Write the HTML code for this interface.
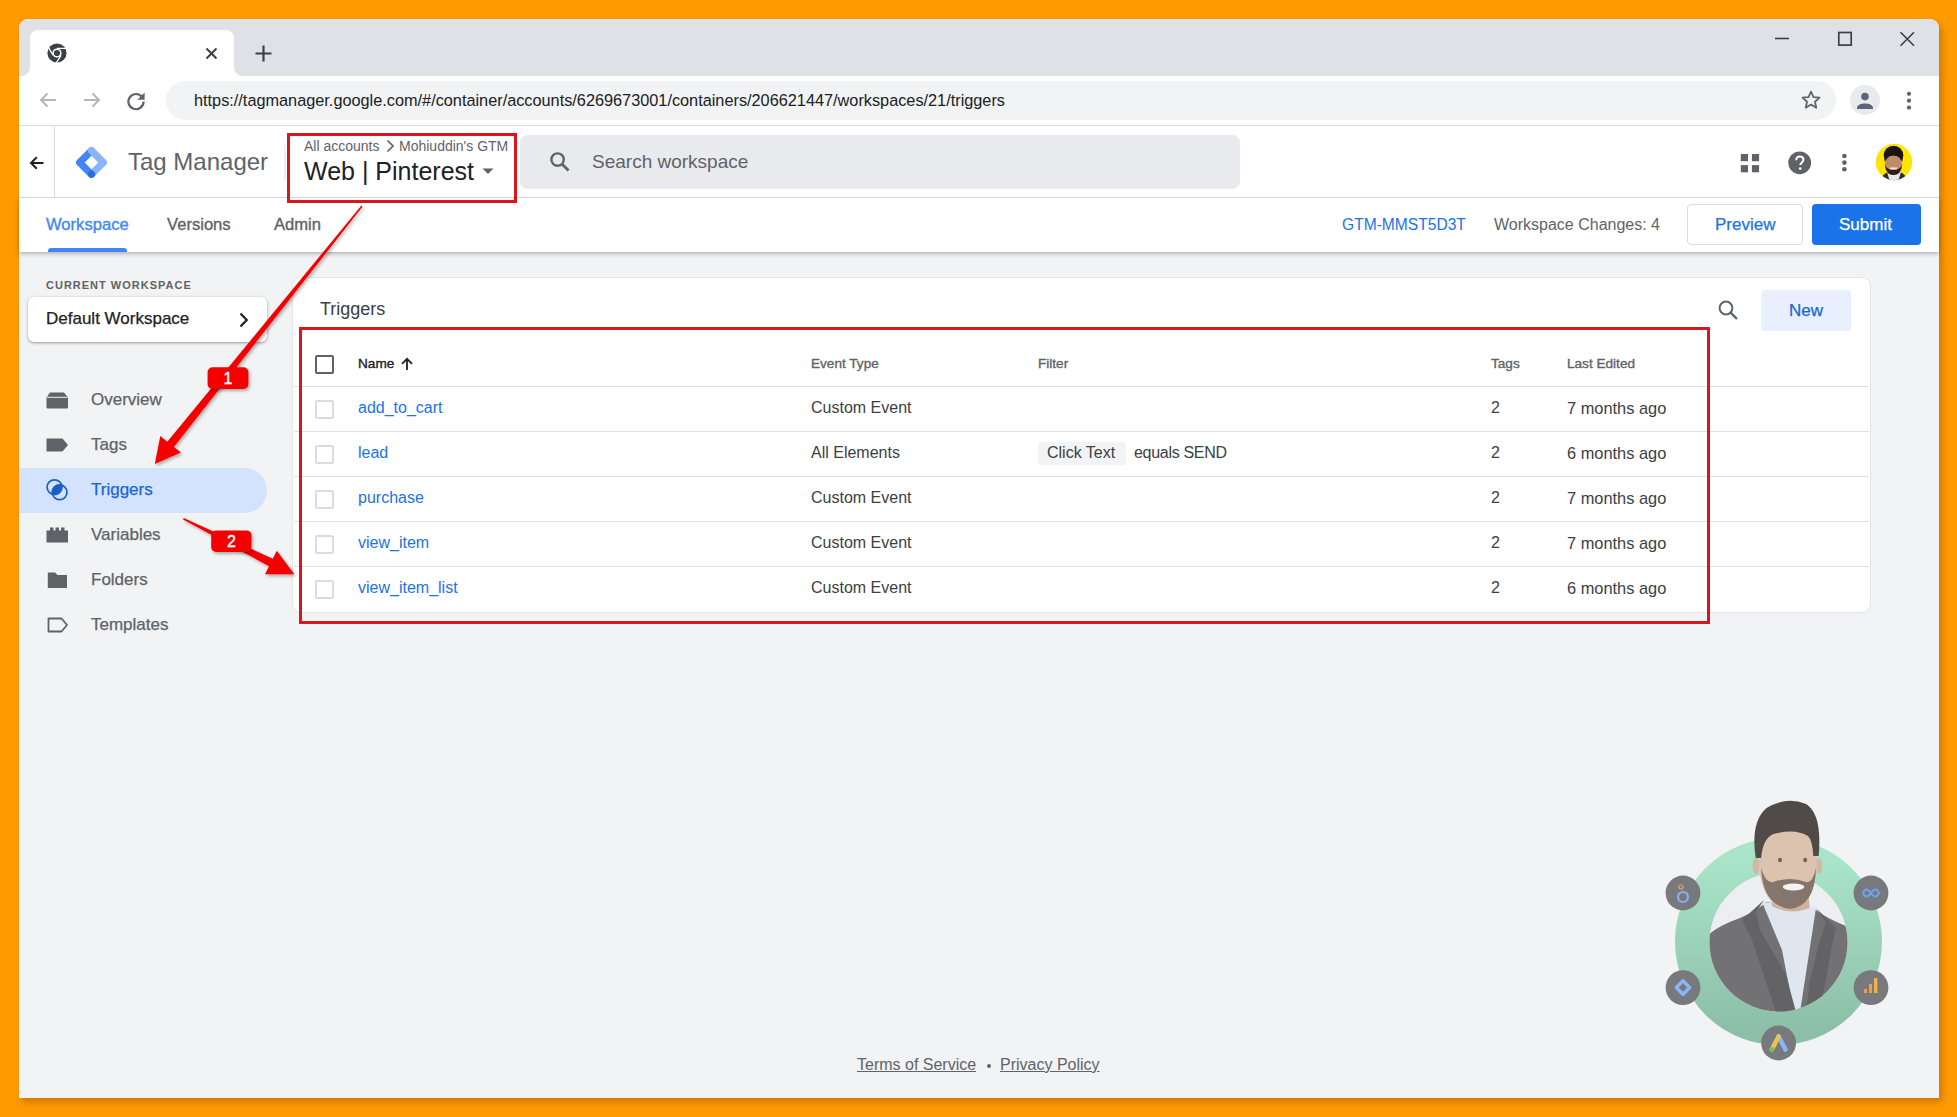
<!DOCTYPE html>
<html><head><meta charset="utf-8">
<style>
*{box-sizing:border-box;margin:0;padding:0}
html,body{width:1957px;height:1117px;overflow:hidden}
body{background:#ff9b00;font-family:"Liberation Sans",sans-serif;position:relative}
.a{position:absolute}
.t{position:absolute;white-space:nowrap;line-height:1}
.m{-webkit-text-stroke-width:0.25px}
#win{left:19px;top:19px;width:1920px;height:1079px;background:#f1f3f4;border-radius:9px 9px 0 0;overflow:hidden;box-shadow:3px 4px 7px rgba(120,60,0,.38)}
</style></head>
<body>
<div id="win" class="a"></div>

<!-- tab strip -->
<div class="a" style="left:19px;top:19px;width:1920px;height:57px;background:#dee1e6;border-radius:9px 9px 0 0"></div>
<!-- active tab -->
<div class="a" style="left:30px;top:30px;width:204px;height:46px;background:#fff;border-radius:8px 8px 0 0"></div>
<div class="a" style="left:22px;top:68px;width:8px;height:8px;background:radial-gradient(circle at 0 0,#dee1e6 7.5px,#fff 8px)"></div>
<div class="a" style="left:234px;top:68px;width:8px;height:8px;background:radial-gradient(circle at 100% 0,#dee1e6 7.5px,#fff 8px)"></div>

<!-- toolbar -->
<div class="a" style="left:19px;top:76px;width:1920px;height:50px;background:#fff;border-bottom:1px solid #dadce0"></div>
<div class="a" style="left:166px;top:81px;width:1670px;height:39px;background:#f1f3f4;border-radius:20px"></div>
<div class="t" style="left:194px;top:92px;font-size:16.3px;color:#202124">https://tagmanager.google.com/#/container/accounts/6269673001/containers/206621447/workspaces/21/triggers</div>


<!-- browser icons -->
<svg class="a" style="left:46px;top:42px" width="22" height="22" viewBox="0 0 22 22">
  <circle cx="11" cy="11" r="9.6" fill="#3c4043"/>
  <circle cx="11" cy="11" r="4.6" fill="#fff"/>
  <circle cx="11" cy="11" r="3.1" fill="#3c4043"/>
  <path d="M11 6.4 L20 6.4 M7 13.3 L2.6 5.6 M15 13.3 L10.2 21" stroke="#fff" stroke-width="1.3" fill="none"/>
</svg>
<svg class="a" style="left:205px;top:47px" width="13" height="13" viewBox="0 0 13 13"><path d="M1.5 1.5L11.5 11.5M11.5 1.5L1.5 11.5" stroke="#3c4043" stroke-width="2"/></svg>
<svg class="a" style="left:255px;top:45px" width="17" height="17" viewBox="0 0 17 17"><path d="M8.5 0.5V16.5M0.5 8.5H16.5" stroke="#3c4043" stroke-width="2.2"/></svg>
<!-- window controls -->
<svg class="a" style="left:1773px;top:30px" width="18" height="18" viewBox="0 0 18 18"><path d="M2 8.5H16" stroke="#3c4043" stroke-width="1.6"/></svg>
<svg class="a" style="left:1836px;top:30px" width="18" height="18" viewBox="0 0 18 18"><rect x="2.8" y="2.5" width="12.4" height="12.6" fill="none" stroke="#3c4043" stroke-width="1.7"/></svg>
<svg class="a" style="left:1898px;top:30px" width="18" height="18" viewBox="0 0 18 18"><path d="M2.5 2.2L16 15.8M16 2.2L2.5 15.8" stroke="#3c4043" stroke-width="1.6"/></svg>
<!-- nav arrows -->
<svg class="a" style="left:38px;top:90px" width="20" height="20" viewBox="0 0 20 20"><path d="M18 10H3M9.5 3.5L3 10L9.5 16.5" stroke="#b4b7bb" stroke-width="2" fill="none"/></svg>
<svg class="a" style="left:82px;top:90px" width="20" height="20" viewBox="0 0 20 20"><path d="M2 10H17M10.5 3.5L17 10L10.5 16.5" stroke="#b4b7bb" stroke-width="2" fill="none"/></svg>
<svg class="a" style="left:125px;top:90px" width="22" height="22" viewBox="0 0 22 22"><path d="M17.2 7.2A7.6 7.6 0 1 0 18.6 11.6" stroke="#5f6368" stroke-width="2.2" fill="none"/><path d="M19.6 2.6V9.8H12.4Z" fill="#5f6368"/></svg>
<svg class="a" style="left:1800px;top:89px" width="22" height="22" viewBox="0 0 24 24"><path d="M12 2.8l2.7 6.1 6.6.6-5 4.4 1.5 6.5L12 17l-5.8 3.4 1.5-6.5-5-4.4 6.6-.6z" fill="none" stroke="#5f6368" stroke-width="1.9" stroke-linejoin="round"/></svg>
<div class="a" style="left:1850px;top:85px;width:30px;height:30px;border-radius:50%;background:#e8eaed"></div>
<svg class="a" style="left:1853px;top:89px" width="24" height="24" viewBox="0 0 24 24"><circle cx="12" cy="7.6" r="3.8" fill="#5b6577"/><path d="M4 19.2c0-3.4 4.4-4.8 8-4.8s8 1.4 8 4.8V20H4z" fill="#5b6577"/></svg>
<svg class="a" style="left:1904px;top:90px" width="10" height="22" viewBox="0 0 10 22"><circle cx="5" cy="3.8" r="2.1" fill="#5f6368"/><circle cx="5" cy="10.7" r="2.1" fill="#5f6368"/><circle cx="5" cy="17.6" r="2.1" fill="#5f6368"/></svg>

<!-- GTM header -->
<div class="a" style="left:19px;top:126px;width:1920px;height:72px;background:#fff;border-bottom:1px solid #dadce0"></div>
<div class="a" style="left:54px;top:126px;width:1px;height:71px;background:#dadce0"></div>
<div class="t" style="left:128px;top:150px;font-size:24px;color:#5f6368">Tag Manager</div>
<div class="a" style="left:284px;top:145px;width:2px;height:36px;background:#eef0f2"></div>
<div class="t" style="left:304px;top:139px;font-size:14px;color:#5f6368">All accounts</div>
<svg class="a" style="left:384px;top:138px" width="12" height="16" viewBox="0 0 12 16"><path d="M3.5 2.5L9 8L3.5 13.5" stroke="#5f6368" stroke-width="1.7" fill="none"/></svg>
<div class="t" style="left:399px;top:139px;font-size:14px;color:#5f6368">Mohiuddin's GTM</div>
<div class="t" style="left:304px;top:159px;font-size:25px;color:#202124">Web | Pinterest</div>
<div class="a" style="left:520px;top:135px;width:720px;height:54px;background:#e9eaee;border-radius:8px"></div>
<div class="t" style="left:592px;top:152px;font-size:19px;color:#5f6368">Search workspace</div>


<svg class="a" style="left:28px;top:154px" width="18" height="18" viewBox="0 0 18 18"><path d="M15.5 9H3M8.8 3.2L3 9L8.8 14.8" stroke="#202124" stroke-width="2" fill="none"/></svg>
<!-- GTM logo -->
<svg class="a" style="left:74px;top:145px" width="35" height="35" viewBox="0 0 35 35">
  <g transform="rotate(45 17.5 17.5)">
    <rect x="5.6" y="5.6" width="23.8" height="23.8" rx="4" fill="#8ab4f8"/>
    <rect x="5.6" y="5.6" width="7.2" height="23.8" rx="3.6" fill="#4285f4"/>
    <rect x="5.6" y="22.2" width="23.8" height="7.2" rx="3.6" fill="#4285f4"/>
    <rect x="5.6" y="5.6" width="23.8" height="7.2" rx="3.6" fill="#8ab4f8"/>
    <rect x="12.8" y="12.8" width="9.4" height="9.4" fill="#fff"/>
    <circle cx="25.8" cy="25.8" r="3.6" fill="#2a6fdb"/>
  </g>
</svg>
<svg class="a" style="left:481px;top:167px" width="14" height="8" viewBox="0 0 14 8"><path d="M1.5 1.5H12.5L7 7z" fill="#5f6368"/></svg>
<svg class="a" style="left:548px;top:150px" width="24" height="24" viewBox="0 0 24 24"><circle cx="9.6" cy="9.6" r="6.2" fill="none" stroke="#5f6368" stroke-width="2.4"/><path d="M14.2 14.2L20.5 20.5" stroke="#5f6368" stroke-width="2.8"/></svg>
<!-- right header icons -->
<svg class="a" style="left:1740px;top:153px" width="20" height="20" viewBox="0 0 20 20"><rect x="0.8" y="1" width="7.2" height="7.2" fill="#5f6368"/><rect x="11.9" y="1" width="7.2" height="7.2" fill="#5f6368"/><rect x="0.8" y="12.1" width="7.2" height="7.2" fill="#5f6368"/><rect x="11.9" y="12.1" width="7.2" height="7.2" fill="#5f6368"/></svg>
<svg class="a" style="left:1787px;top:150px" width="26" height="26" viewBox="0 0 26 26"><circle cx="12.7" cy="12.8" r="11.4" fill="#5f6368"/><path d="M9.2 10.2c0-2.2 1.6-3.6 3.6-3.6s3.6 1.3 3.6 3.2c0 2.4-3.1 2.8-3.1 5.2" fill="none" stroke="#fff" stroke-width="2"/><circle cx="13.2" cy="18.6" r="1.3" fill="#fff"/></svg>
<svg class="a" style="left:1839px;top:150px" width="10" height="26" viewBox="0 0 10 26"><circle cx="5.4" cy="6" r="2.3" fill="#5f6368"/><circle cx="5.4" cy="12.6" r="2.3" fill="#5f6368"/><circle cx="5.4" cy="19.3" r="2.3" fill="#5f6368"/></svg>
<!-- avatar -->
<svg class="a" style="left:1874px;top:142px" width="40" height="40" viewBox="1874 142 40 40">
  <defs><clipPath id="av"><circle cx="1894" cy="162" r="18.2"/></clipPath></defs>
  <circle cx="1894" cy="162" r="18.2" fill="#ffe500"/>
  <g clip-path="url(#av)">
    <path d="M1880 182 Q1882 174 1888 172 L1900 172 Q1906 174 1908 182Z" fill="#2e2e30"/>
    <path d="M1887 172 L1901 172 L1898 182 L1890 182Z" fill="#e8e8ea"/>
    <ellipse cx="1893.5" cy="155.5" rx="9.8" ry="9.8" fill="#1a1512"/>
    <ellipse cx="1893.5" cy="165" rx="8.8" ry="10" fill="#c08b68"/>
    <path d="M1884.2 162 Q1884.5 151 1893.5 151 Q1902.5 151 1902.8 162 Q1901 155.5 1893.5 155.5 Q1886 155.5 1884.2 162Z" fill="#1a1512"/>
    <path d="M1885 165 Q1886 175 1893.5 175 Q1901 175 1902 165 Q1900 170 1893.5 170 Q1887 170 1885 165Z" fill="#2a1d17"/>
    <path d="M1889.5 167.5 L1897.5 167.5 L1896.5 169.3 L1890.5 169.3Z" fill="#f2ece6"/>
  </g>
</svg>

<!-- nav tabs row -->
<div class="a" style="left:19px;top:198px;width:1920px;height:54px;background:#fff;box-shadow:0 2px 4px rgba(0,0,0,.25)"></div>
<div class="t" style="left:46px;top:217px;font-size:16.6px;color:#4285f4;-webkit-text-stroke:0.35px #4285f4">Workspace</div>
<div class="t" style="left:167px;top:217px;font-size:16.6px;color:#5f6368;-webkit-text-stroke:0.35px #5f6368">Versions</div>
<div class="t" style="left:274px;top:217px;font-size:16.6px;color:#5f6368;-webkit-text-stroke:0.35px #5f6368">Admin</div>
<div class="a" style="left:48px;top:248px;width:79px;height:4px;background:#4285f4;border-radius:3px 3px 0 0"></div>


<div class="t" style="left:1342px;top:217px;font-size:15.6px;color:#1a73e8">GTM-MMST5D3T</div>
<div class="t" style="left:1494px;top:217px;font-size:16px;color:#5f6368">Workspace Changes: 4</div>
<div class="a" style="left:1687px;top:204px;width:116px;height:41px;border:1px solid #dadce0;border-radius:4px;background:#fff"></div>
<div class="t m" style="left:1715px;top:216px;font-size:17px;color:#1a73e8">Preview</div>
<div class="a" style="left:1812px;top:204px;width:109px;height:41px;border-radius:4px;background:#1a73e8"></div>
<div class="t m" style="left:1839px;top:216px;font-size:17px;color:#fff">Submit</div>

<!-- sidebar -->
<div class="t" style="left:46px;top:280px;font-size:11px;font-weight:700;letter-spacing:1px;color:#5f6368">CURRENT WORKSPACE</div>
<div class="a" style="left:28px;top:297px;width:239px;height:45px;background:#fff;border-radius:6px;box-shadow:0 1px 2px rgba(60,64,67,.3),0 1px 3px 1px rgba(60,64,67,.15)"></div>
<div class="t m" style="left:46px;top:310px;font-size:17px;color:#202124">Default Workspace</div>
<svg class="a" style="left:236px;top:311px" width="16" height="18" viewBox="0 0 16 18"><path d="M4.5 2.5L10.8 9L4.5 15.5" stroke="#202124" stroke-width="2.2" fill="none"/></svg>

<div class="a" style="left:19px;top:468px;width:248px;height:45px;background:#d3e3fd;border-radius:0 23px 23px 0"></div>
<!-- nav icons -->
<svg class="a" style="left:45px;top:390px" width="25" height="20" viewBox="0 0 25 20"><path d="M1.5 7.5L5 2.5H19L23 7.5V17.5Q23 18.5 22 18.5H2.5Q1.5 18.5 1.5 17.5Z" fill="#5f6368"/><path d="M2 7.3H22.5" stroke="#f1f3f4" stroke-width="1"/></svg>
<svg class="a" style="left:45px;top:436px" width="25" height="18" viewBox="0 0 25 18"><path d="M1.5 2.5H17.5L23 9L17.5 15.5H1.5Z" fill="#5f6368"/></svg>
<svg class="a" style="left:44px;top:477px" width="26" height="26" viewBox="44 477 26 26"><circle cx="54.5" cy="487.2" r="7.4" fill="none" stroke="#1a5fc4" stroke-width="1.7"/><circle cx="59.6" cy="492.3" r="7.4" fill="none" stroke="#1a5fc4" stroke-width="1.7"/><path d="M52.3 494.5A7.4 7.4 0 0 1 61.8 485A7.4 7.4 0 0 1 52.3 494.5Z" fill="#1a5fc4"/></svg>
<svg class="a" style="left:45px;top:525px" width="25" height="20" viewBox="0 0 25 20"><path d="M1.5 5.5H5V2.5H8.5V5.5H10.5V2.5H14V5.5H16V2.5H19.5V5.5H23V17.5H1.5Z" fill="#5f6368"/></svg>
<svg class="a" style="left:45px;top:569px" width="25" height="22" viewBox="0 0 25 22"><path d="M2.8 3.5H10L12.5 6H22V19H2.8Z" fill="#5f6368"/></svg>
<svg class="a" style="left:45px;top:614px" width="25" height="22" viewBox="0 0 25 22"><path d="M3.5 4.5H16.5L22 11L16.5 17.5H3.5Z" fill="none" stroke="#5f6368" stroke-width="1.8" stroke-linejoin="round"/></svg>
<div class="t m" style="left:91px;top:391px;font-size:17px;color:#5f6368">Overview</div>
<div class="t m" style="left:91px;top:436px;font-size:17px;color:#5f6368">Tags</div>
<div class="t m" style="left:91px;top:481px;font-size:17px;color:#1967d2">Triggers</div>
<div class="t m" style="left:91px;top:526px;font-size:17px;color:#5f6368">Variables</div>
<div class="t m" style="left:91px;top:571px;font-size:17px;color:#5f6368">Folders</div>
<div class="t m" style="left:91px;top:616px;font-size:17px;color:#5f6368">Templates</div>

<!-- main card -->
<div class="a" style="left:293px;top:278px;width:1577px;height:334px;background:#fff;border-radius:8px;box-shadow:0 0 0 1px #e3e5e8"></div>
<div class="t" style="left:320px;top:300px;font-size:18px;color:#3c4043">Triggers</div>
<svg class="a" style="left:1716px;top:298px" width="24" height="24" viewBox="0 0 24 24"><circle cx="10" cy="10" r="6.4" fill="none" stroke="#5f6368" stroke-width="2"/><path d="M14.6 14.6L21 21" stroke="#5f6368" stroke-width="2.4"/></svg>
<div class="a" style="left:1761px;top:290px;width:90px;height:41px;background:#e8f0fe;border-radius:4px"></div>
<div class="t m" style="left:1789px;top:302px;font-size:17px;color:#1967d2">New</div>
<div class="a" style="left:315px;top:355px;width:19px;height:19px;border:2px solid #5f6368;border-radius:2px"></div>
<div class="t" style="left:358px;top:357px;font-size:13.6px;-webkit-text-stroke-width:0.35px;color:#202124">Name</div>
<svg class="a" style="left:400px;top:357px" width="14" height="14" viewBox="0 0 14 14"><path d="M7 13V2M2 6.8L7 1.8L12 6.8" stroke="#202124" stroke-width="1.8" fill="none"/></svg>
<div class="t" style="left:811px;top:357px;font-size:13.6px;-webkit-text-stroke-width:0.35px;color:#5f6368">Event Type</div>
<div class="t" style="left:1038px;top:357px;font-size:13.6px;-webkit-text-stroke-width:0.35px;color:#5f6368">Filter</div>
<div class="t" style="left:1491px;top:357px;font-size:13.6px;-webkit-text-stroke-width:0.35px;color:#5f6368">Tags</div>
<div class="t" style="left:1567px;top:357px;font-size:13.6px;-webkit-text-stroke-width:0.35px;color:#5f6368">Last Edited</div>
<div class="a" style="left:294px;top:386px;width:1575px;height:1px;background:#e0e0e0"></div>
<div class="a" style="left:315px;top:400px;width:19px;height:19px;border:2px solid #dadce0;border-radius:2px"></div>
<div class="t" style="left:358px;top:400px;font-size:16px;color:#1a73e8">add_to_cart</div>
<div class="t" style="left:811px;top:400px;font-size:16px;color:#3c4043">Custom Event</div>
<div class="t" style="left:1491px;top:400px;font-size:16px;color:#3c4043">2</div>
<div class="t" style="left:1567px;top:400px;font-size:16.4px;color:#3c4043">7 months ago</div>
<div class="a" style="left:294px;top:431px;width:1575px;height:1px;background:#e0e0e0"></div>
<div class="a" style="left:315px;top:445px;width:19px;height:19px;border:2px solid #dadce0;border-radius:2px"></div>
<div class="t" style="left:358px;top:445px;font-size:16px;color:#1a73e8">lead</div>
<div class="t" style="left:811px;top:445px;font-size:16px;color:#3c4043">All Elements</div>
<div class="a" style="left:1038px;top:442px;width:88px;height:23px;background:#f1f3f4;border-radius:3px"></div>
<div class="t" style="left:1047px;top:445px;font-size:16px;color:#3c4043">Click Text</div>
<div class="t" style="left:1134px;top:445px;font-size:16px;letter-spacing:-0.3px;color:#3c4043">equals SEND</div>
<div class="t" style="left:1491px;top:445px;font-size:16px;color:#3c4043">2</div>
<div class="t" style="left:1567px;top:445px;font-size:16.4px;color:#3c4043">6 months ago</div>
<div class="a" style="left:294px;top:476px;width:1575px;height:1px;background:#e0e0e0"></div>
<div class="a" style="left:315px;top:490px;width:19px;height:19px;border:2px solid #dadce0;border-radius:2px"></div>
<div class="t" style="left:358px;top:490px;font-size:16px;color:#1a73e8">purchase</div>
<div class="t" style="left:811px;top:490px;font-size:16px;color:#3c4043">Custom Event</div>
<div class="t" style="left:1491px;top:490px;font-size:16px;color:#3c4043">2</div>
<div class="t" style="left:1567px;top:490px;font-size:16.4px;color:#3c4043">7 months ago</div>
<div class="a" style="left:294px;top:521px;width:1575px;height:1px;background:#e0e0e0"></div>
<div class="a" style="left:315px;top:535px;width:19px;height:19px;border:2px solid #dadce0;border-radius:2px"></div>
<div class="t" style="left:358px;top:535px;font-size:16px;color:#1a73e8">view_item</div>
<div class="t" style="left:811px;top:535px;font-size:16px;color:#3c4043">Custom Event</div>
<div class="t" style="left:1491px;top:535px;font-size:16px;color:#3c4043">2</div>
<div class="t" style="left:1567px;top:535px;font-size:16.4px;color:#3c4043">7 months ago</div>
<div class="a" style="left:294px;top:566px;width:1575px;height:1px;background:#e0e0e0"></div>
<div class="a" style="left:315px;top:580px;width:19px;height:19px;border:2px solid #dadce0;border-radius:2px"></div>
<div class="t" style="left:358px;top:580px;font-size:16px;color:#1a73e8">view_item_list</div>
<div class="t" style="left:811px;top:580px;font-size:16px;color:#3c4043">Custom Event</div>
<div class="t" style="left:1491px;top:580px;font-size:16px;color:#3c4043">2</div>
<div class="t" style="left:1567px;top:580px;font-size:16.4px;color:#3c4043">6 months ago</div>

<!-- footer -->
<div class="t" style="left:857px;top:1057px;font-size:16px;color:#5f6368;text-decoration:underline">Terms of Service</div>
<div class="a" style="left:987px;top:1064px;width:4px;height:4px;border-radius:50%;background:#5f6368"></div>
<div class="t" style="left:1000px;top:1057px;font-size:16px;color:#5f6368;text-decoration:underline">Privacy Policy</div>

<!-- red box 2 -->
<div class="a" style="left:299px;top:327px;width:1411px;height:297px;border:3px solid #d8171d"></div>



<!-- watermark -->
<svg class="a" style="left:1650px;top:790px" width="250" height="280" viewBox="1650 790 250 280">
  <defs>
    <linearGradient id="rg" x1="0" y1="0" x2="0" y2="1"><stop offset="0" stop-color="#a9e6c9"/><stop offset="1" stop-color="#8dbfa8"/></linearGradient>
    <clipPath id="inner"><circle cx="1778.5" cy="942.5" r="69"/></clipPath>
    <clipPath id="top"><rect x="1650" y="790" width="250" height="150"/></clipPath>
  </defs>
  <circle cx="1778.5" cy="941.5" r="86" fill="none" stroke="url(#rg)" stroke-width="35"/>
  <circle cx="1778.5" cy="942.5" r="69" fill="#eceef1"/>
  <g clip-path="url(#inner)">
    <path d="M1700 1015 L1704 940 Q1712 928 1740 918 Q1758 910 1766 902 L1816 910 Q1826 918 1846 926 Q1854 932 1856 950 L1856 1015 Z" fill="#727274"/>
    <path d="M1762 902 L1816 908 L1808 960 L1800 1012 L1794 1012 L1782 950 Z" fill="#dfe6f0"/>
    <path d="M1764 900 L1756 912 L1760 930 L1786 975 L1796 1012 L1776 1012 L1752 940 L1742 920 Z" fill="#636365"/>
    <path d="M1816 908 L1826 922 L1820 940 L1810 980 L1806 1012 L1820 1012 L1832 945 L1836 928 Z" fill="#636365"/>
  </g>
<g transform="translate(1789 0) scale(0.9 1) translate(-1789 0)">
  <path d="M1770 884 L1770 906 Q1790 916 1812 908 L1810 884 Z" fill="#cfb29d"/>
  <ellipse cx="1752.5" cy="866" rx="4" ry="8" fill="#d4b7a2"/>
  <ellipse cx="1822" cy="866" rx="4" ry="8" fill="#d4b7a2"/>
  <ellipse cx="1788" cy="866" rx="32" ry="43" fill="#dcc3b0"/>
  <path d="M1758 868 Q1760 906 1790 909 Q1818 906 1819 868 Q1815 884 1808 882 Q1790 876 1772 882 Q1763 884 1758 868Z" fill="#85766d"/>
  <ellipse cx="1794" cy="887" rx="12" ry="3.4" fill="#f6f3f0"/>
  <circle cx="1779" cy="860" r="2.2" fill="#6f625b"/><circle cx="1807" cy="860" r="2.2" fill="#6f625b"/>
  <path d="M1752 858 Q1746 822 1764 808 Q1786 796 1808 804 Q1826 814 1822 856 L1816 856 Q1815 840 1810 836 Q1796 828 1772 834 Q1760 838 1758 858Z" fill="#504b48"/>
  </g>
  <g fill="#78797d">
    <circle cx="1683" cy="893" r="17.4"/><circle cx="1871" cy="893" r="17.4"/>
    <circle cx="1683" cy="987.6" r="17.4"/><circle cx="1871" cy="987.6" r="17.4"/>
    <circle cx="1778.6" cy="1043" r="17.4"/>
  </g>
  <circle cx="1683" cy="897" r="5" fill="none" stroke="#8ab0f0" stroke-width="2.2"/>
  <circle cx="1681" cy="887" r="2" fill="none" stroke="#e8a060" stroke-width="1.2"/>
  <path d="M1863 893 Q1866 886 1871 893 Q1876 900 1879 893 Q1876 886 1871 893 Q1866 900 1863 893Z" fill="none" stroke="#6fa2ee" stroke-width="2"/>
  <g transform="rotate(45 1683 987.6)"><rect x="1676.5" y="981.1" width="13" height="13" rx="2" fill="#8ab4f8"/><rect x="1680" y="984.6" width="6" height="6" fill="#78797d"/></g>
  <rect x="1864" y="989" width="3" height="4" fill="#e9a24a"/><rect x="1869" y="984" width="3" height="9" fill="#e9a24a"/><rect x="1874" y="978" width="3.4" height="15" fill="#f0b04a"/>
  <path d="M1778.6 1036.5 L1785.5 1049.5" stroke="#8ab4f8" stroke-width="4.6" stroke-linecap="round"/><path d="M1778.6 1036.5 L1771.8 1049.5" stroke="#e8c453" stroke-width="4.6" stroke-linecap="round"/><circle cx="1771.8" cy="1049.5" r="2.4" fill="#6cbf78"/>
</svg>

<!-- annotations -->
<svg class="a" style="left:0;top:0" width="1957" height="1117" viewBox="0 0 1957 1117">
  <defs><filter id="ds" x="-30%" y="-30%" width="160%" height="160%"><feDropShadow dx="1.5" dy="2" stdDeviation="1.5" flood-color="#000" flood-opacity="0.3"/></filter></defs>
  <path d="M361.4 205.5 L167.3 441.7 L160.3 436.1 L154.8 464.0 L180.9 452.5 L173.9 446.9 L362.6 206.5Z" fill="#f50000" filter="url(#ds)"/>
  <path d="M183.0 519.5 L269.0 566.2 L265.0 574.2 L294.4 574.3 L276.8 550.7 L272.8 558.7 L183.8 518.1Z" fill="#f50000" filter="url(#ds)"/>
  <rect x="207.6" y="367.2" width="40.8" height="21.7" rx="5" fill="#f50000" filter="url(#ds)"/>
  <rect x="211.2" y="530.4" width="40.3" height="21.6" rx="5" fill="#f50000" filter="url(#ds)"/>
  <text x="228" y="384" font-family="Liberation Sans" font-size="16" fill="#fff" stroke="#fff" stroke-width="0.4" text-anchor="middle">1</text>
  <text x="231.4" y="547.2" font-family="Liberation Sans" font-size="16" fill="#fff" stroke="#fff" stroke-width="0.4" text-anchor="middle">2</text>
</svg>

<!-- red box 1 -->
<div class="a" style="left:287px;top:133px;width:230px;height:70px;border:3px solid #d8171d"></div>
</body></html>
